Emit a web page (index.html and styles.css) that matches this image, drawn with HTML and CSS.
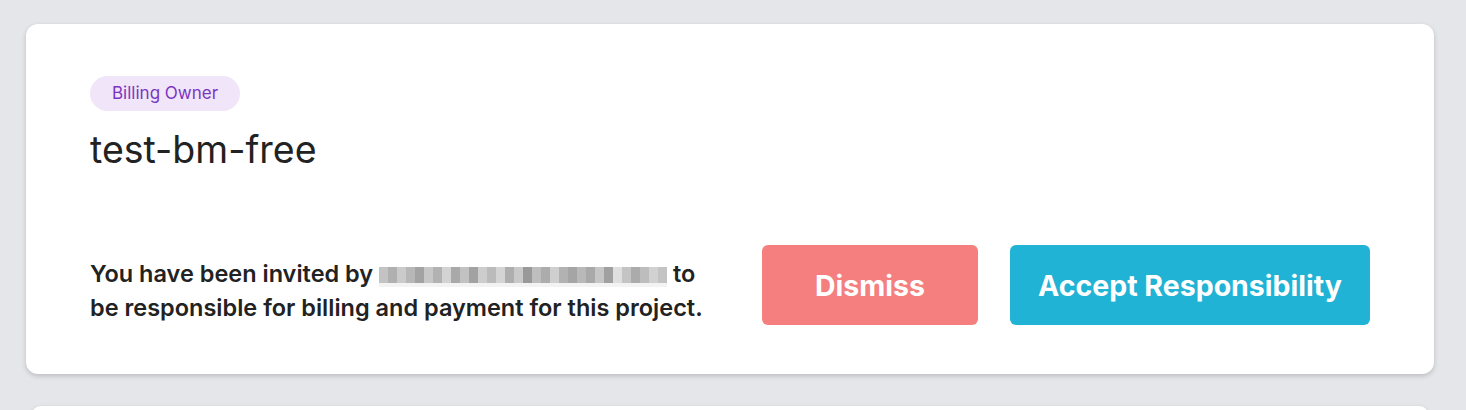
FILE: index.html
```html
<!DOCTYPE html>
<html lang="en">
<head>
<meta charset="utf-8">
<title>Billing invitation</title>
<link rel="stylesheet" href="styles.css">
</head>
<body>
<main class="list">
  <section class="card">
    <div class="head">
      <span class="badge">Billing Owner</span>
      <h1 class="title">test-bm-free</h1>
    </div>
    <div class="foot">
      <p class="msg">You have been invited by <span class="redacted" aria-label="hidden email"></span> to be responsible for billing and payment for this project.</p>
      <div class="actions">
        <button class="btn btn-dismiss">Dismiss</button>
        <button class="btn btn-accept">Accept Responsibility</button>
      </div>
    </div>
  </section>
  <section class="card card-next"></section>
</main>
</body>
</html>
```

FILE: styles.css
```css
html, body {
  margin: 0;
  padding: 0;
  background: #e5e6ea;
  font-family: Inter, "Noto Sans", sans-serif;
  color: #222;
}

.list {
  display: flex;
  flex-direction: column;
  gap: 32px;
  padding: 24px 32px 0 26px;
}

.card {
  background: #fff;
  border-radius: 12px;
  box-shadow: 0 2px 5px rgba(0, 0, 0, 0.18);
  padding: 52px 64px 49px 64px;
  display: flex;
  flex-direction: column;
  gap: 73px;
}

.card-next {
  margin: 0 5px;
  height: 120px;
  padding: 0;
  border-radius: 10px;
}

.head {
  display: flex;
  flex-direction: column;
  align-items: flex-start;
  gap: 17px;
}

.badge {
  display: inline-block;
  background: #f0e5f9;
  color: #7c35c1;
  font-size: 17px;
  line-height: 35px;
  height: 35px;
  padding: 0 22px;
  border-radius: 18px;
}

.title {
  margin: 0;
  font-size: 37.5px;
  font-weight: 400;
  line-height: 44px;
  color: #222;
}

.foot {
  display: flex;
  align-items: center;
  justify-content: space-between;
}

.msg {
  margin: 0;
  padding-top: 11px;
  width: 625px;
  font-size: 23.5px;
  font-weight: 600;
  line-height: 34px;
  color: #222;
}

.redacted {
  display: inline-block;
  width: 288px;
  height: 24px;
  vertical-align: -5px;
  background:
    linear-gradient(90deg,
      #bdbdbd 0 9px, #a8a8a8 9px 18px, #c6c6c6 18px 27px, #b0b0b0 27px 36px,
      #9a9a9a 36px 45px, #c2c2c2 45px 54px, #aaaaaa 54px 63px, #cfcfcf 63px 72px,
      #a0a0a0 72px 81px, #bcbcbc 81px 90px, #999 90px 99px, #c8c8c8 99px 108px,
      #b4b4b4 108px 117px, #d0d0d0 117px 126px, #a6a6a6 126px 135px, #c4c4c4 135px 144px,
      #8f8f8f 144px 153px, #b8b8b8 153px 162px, #a4a4a4 162px 171px, #cacaca 171px 180px,
      #aaa 180px 189px, #9c9c9c 189px 198px, #b2b2b2 198px 207px, #a0a0a0 207px 216px,
      #c0c0c0 216px 225px, #969696 225px 234px, #dcdcdc 234px 243px, #bebebe 243px 252px,
      #a2a2a2 252px 261px, #b6b6b6 261px 270px, #cdcdcd 270px 279px, #bdbdbd 279px 288px)
      0 4px / 288px 16px no-repeat,
    linear-gradient(#f2f2f2, #f2f2f2) 0 20px / 288px 4px no-repeat;
  opacity: 0.9;
}

.actions {
  display: flex;
  gap: 32px;
}

.btn {
  border: 0;
  border-radius: 6px;
  height: 80px;
  color: #fff;
  font-family: Inter, "Noto Sans", sans-serif;
  font-size: 28.5px;
  font-weight: 700;
  cursor: pointer;
}

.btn-dismiss {
  width: 216px;
  background: #f47f7e;
}

.btn-accept {
  width: 360px;
  background: #21b3d5;
}
```
